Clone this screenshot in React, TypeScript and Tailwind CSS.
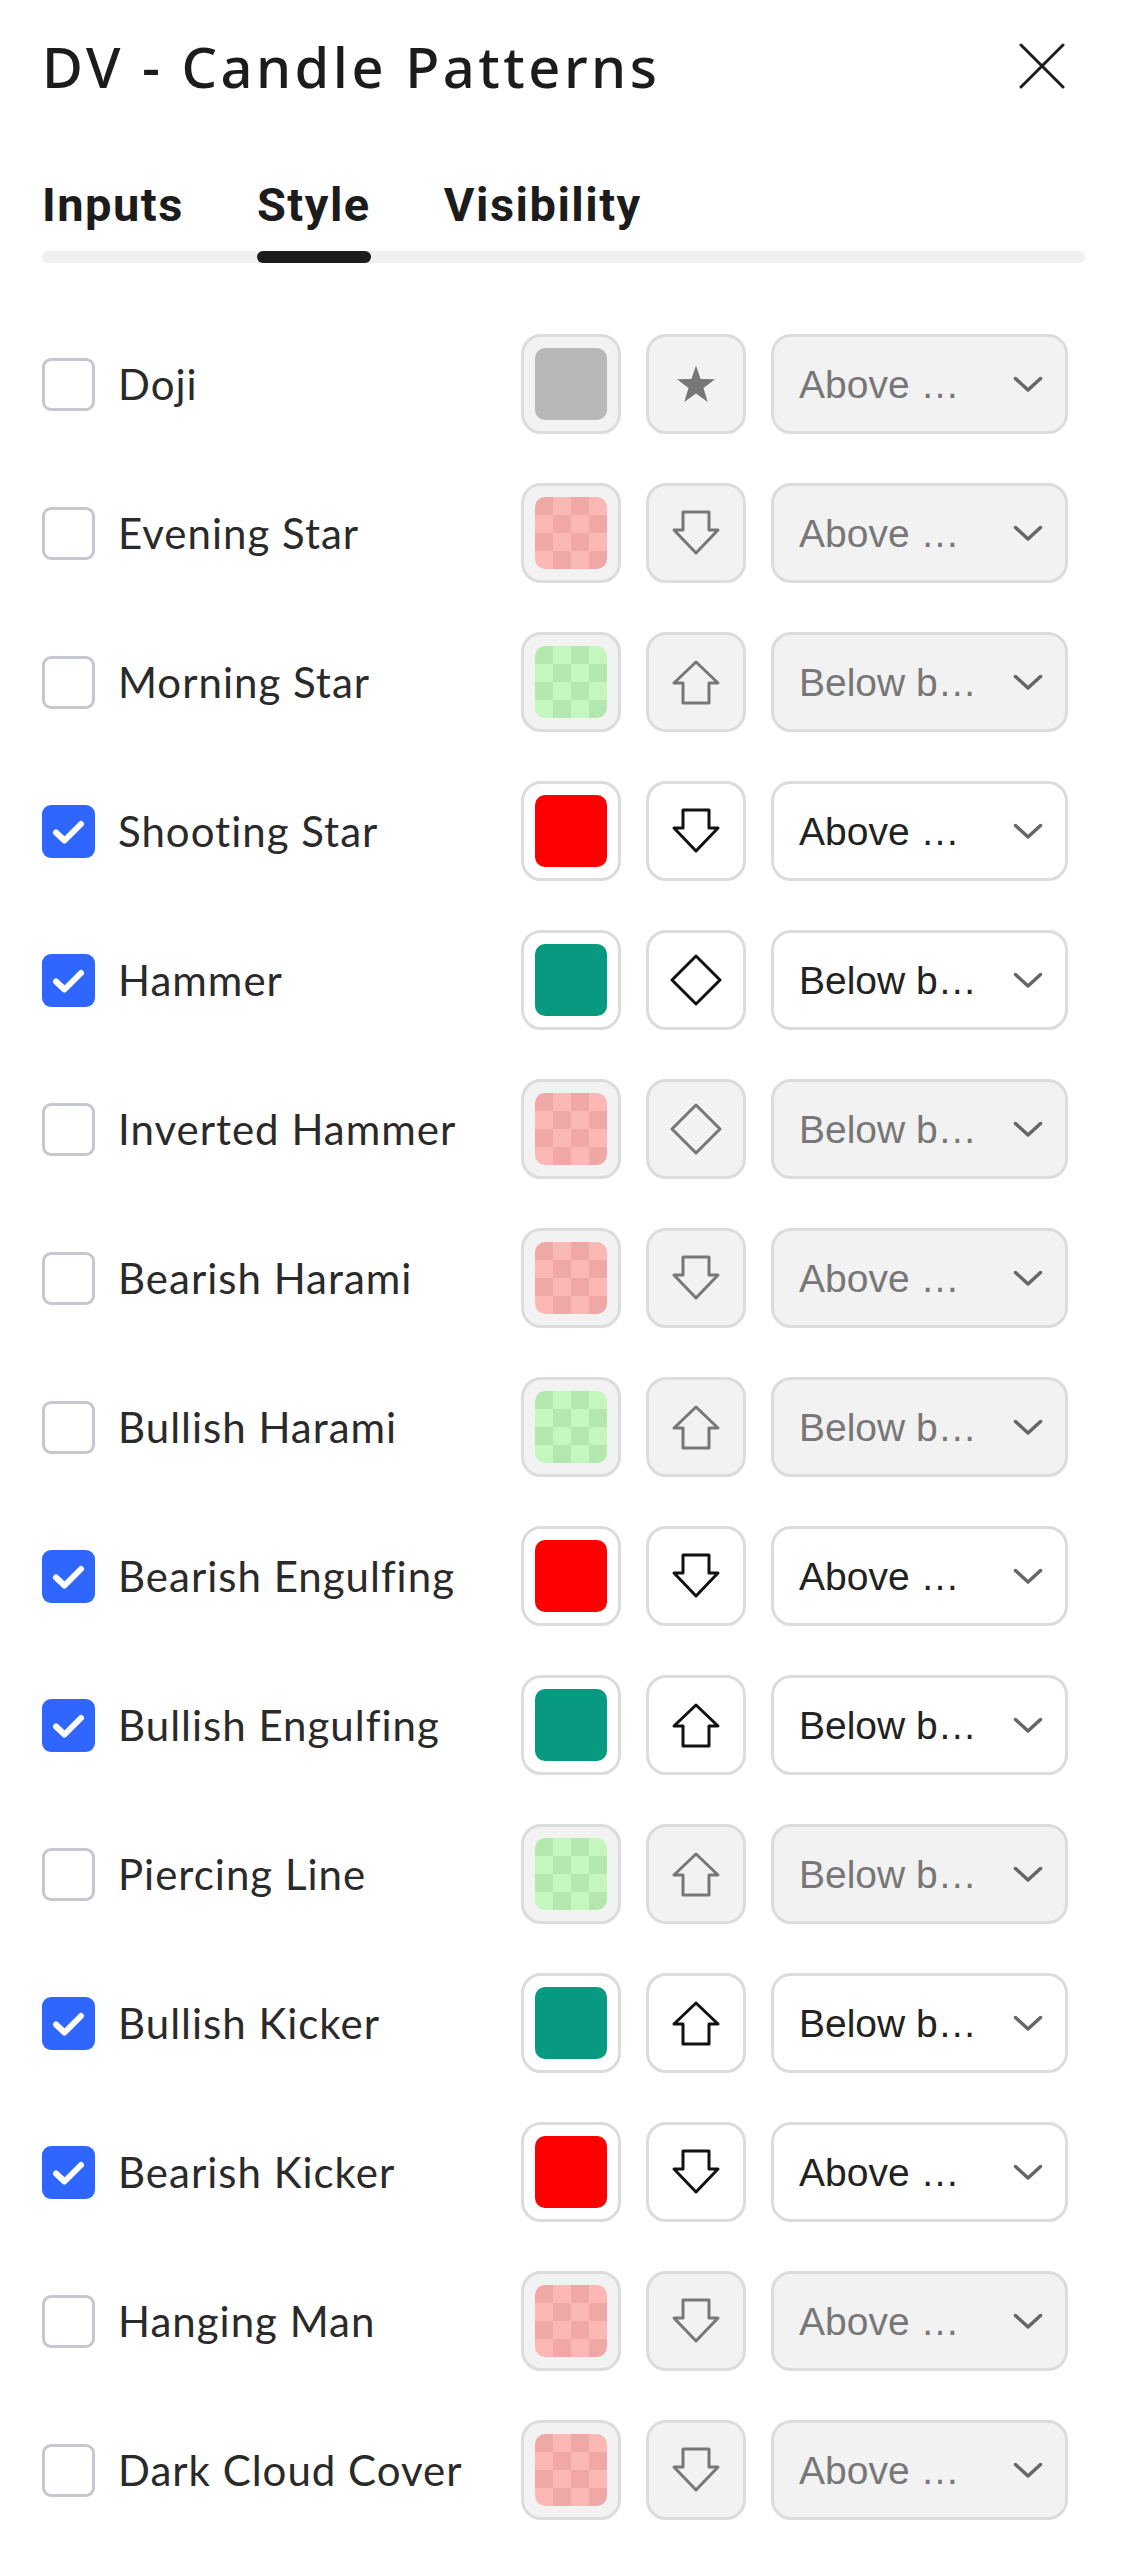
import React from 'react';

type Shape = 'star' | 'down' | 'up' | 'diamond';
type Swatch = 'gray' | 'pink' | 'green' | 'red' | 'teal';

interface PatternRow {
  name: string;
  enabled: boolean;
  swatch: Swatch;
  shape: Shape;
  place: string;
}

const rows: PatternRow[] = [
  { name: 'Doji', enabled: false, swatch: 'gray', shape: 'star', place: 'Above …' },
  { name: 'Evening Star', enabled: false, swatch: 'pink', shape: 'down', place: 'Above …' },
  { name: 'Morning Star', enabled: false, swatch: 'green', shape: 'up', place: 'Below b…' },
  { name: 'Shooting Star', enabled: true, swatch: 'red', shape: 'down', place: 'Above …' },
  { name: 'Hammer', enabled: true, swatch: 'teal', shape: 'diamond', place: 'Below b…' },
  { name: 'Inverted Hammer', enabled: false, swatch: 'pink', shape: 'diamond', place: 'Below b…' },
  { name: 'Bearish Harami', enabled: false, swatch: 'pink', shape: 'down', place: 'Above …' },
  { name: 'Bullish Harami', enabled: false, swatch: 'green', shape: 'up', place: 'Below b…' },
  { name: 'Bearish Engulfing', enabled: true, swatch: 'red', shape: 'down', place: 'Above …' },
  { name: 'Bullish Engulfing', enabled: true, swatch: 'teal', shape: 'up', place: 'Below b…' },
  { name: 'Piercing Line', enabled: false, swatch: 'green', shape: 'up', place: 'Below b…' },
  { name: 'Bullish Kicker', enabled: true, swatch: 'teal', shape: 'up', place: 'Below b…' },
  { name: 'Bearish Kicker', enabled: true, swatch: 'red', shape: 'down', place: 'Above …' },
  { name: 'Hanging Man', enabled: false, swatch: 'pink', shape: 'down', place: 'Above …' },
  { name: 'Dark Cloud Cover', enabled: false, swatch: 'pink', shape: 'down', place: 'Above …' },
];

const CheckBox: React.FC<{ checked: boolean }> = ({ checked }) =>
  checked ? (
    <div className="flex h-[53px] w-[53px] shrink-0 items-center justify-center rounded-[9px] bg-[#2f66ff]">
      <svg width="53" height="53" viewBox="0 0 53 53" fill="none">
        <path d="M14 27.5 L22.5 35.5 L39 19" stroke="white" strokeWidth="6" strokeLinecap="round" strokeLinejoin="round" />
      </svg>
    </div>
  ) : (
    <div className="h-[53px] w-[53px] shrink-0 rounded-[9px] border-[3px] border-[#c5c8d0] bg-white" />
  );

const Checker: React.FC<{ light: string; dark: string }> = ({ light, dark }) => (
  <div className="grid h-[72px] w-[72px] grid-cols-4 overflow-hidden rounded-[10px]">
    {Array.from({ length: 16 }).map((_, i) => {
      const r = Math.floor(i / 4);
      const c = i % 4;
      return <div key={i} className="h-[18px] w-[18px]" style={{ background: (r + c) % 2 === 0 ? dark : light }} />;
    })}
  </div>
);

const SwatchFill: React.FC<{ swatch: Swatch }> = ({ swatch }) => {
  if (swatch === 'pink') return <Checker light="#fbb8b4" dark="#efa8a6" />;
  if (swatch === 'green') return <Checker light="#c3f7be" dark="#b2e8ad" />;
  if (swatch === 'gray') return <div className="h-[72px] w-[72px] rounded-[10px] bg-[#b8b8b8]" />;
  if (swatch === 'red') return <div className="h-[72px] w-[72px] rounded-[10px] bg-[#ff0000]" />;
  return <div className="h-[72px] w-[72px] rounded-[10px] bg-[#089981]" />;
};

const ShapeIcon: React.FC<{ shape: Shape; color: string }> = ({ shape, color }) => {
  if (shape === 'star')
    return (
      <svg width="40" height="38" viewBox="0 0 40 38">
        <path d="M20 0.5 L24.6 14 L39 14.2 L27.5 22.9 L31.7 37 L20 28.6 L8.3 37 L12.5 22.9 L1 14.2 L15.4 14 Z" fill={color} />
      </svg>
    );
  if (shape === 'down')
    return (
      <svg width="50" height="46" viewBox="0 0 50 46" fill="none">
        <path d="M12 2 H38 V20 H47 L25 43 L3 20 H12 Z" stroke={color} strokeWidth="3" strokeLinejoin="round" />
      </svg>
    );
  if (shape === 'up')
    return (
      <svg width="50" height="46" viewBox="0 0 50 46" fill="none">
        <path d="M25 3 L47 24 H38 V44 H12 V24 H3 Z" stroke={color} strokeWidth="3" strokeLinejoin="round" />
      </svg>
    );
  return (
    <svg width="52" height="52" viewBox="0 0 52 52" fill="none">
      <path d="M26 2 L50 26 L26 50 L2 26 Z" stroke={color} strokeWidth="3" strokeLinejoin="round" />
    </svg>
  );
};

const Row: React.FC<{ row: PatternRow }> = ({ row }) => {
  const box = row.enabled ? 'bg-white border-[#dcdcdc]' : 'bg-[#f2f2f2] border-[#dcdcdc]';
  return (
    <div className="flex h-[100px] items-center">
      <div className="flex flex-1 items-center gap-[23px]">
        <CheckBox checked={row.enabled} />
        <span className="text-[42px] leading-none tracking-[1px] text-[#2a2a2a]">{row.name}</span>
      </div>
      <div className="flex items-center gap-[25px]">
        <div className={`flex h-[100px] w-[100px] items-center justify-center rounded-[20px] border-[3px] ${box}`}>
          <SwatchFill swatch={row.swatch} />
        </div>
        <div className={`flex h-[100px] w-[100px] items-center justify-center rounded-[20px] border-[3px] ${box}`}>
          <ShapeIcon shape={row.shape} color={row.enabled ? '#111111' : '#777777'} />
        </div>
        <div className={`flex h-[100px] w-[297px] items-center justify-between rounded-[20px] border-[3px] pl-[25px] pr-[22px] ${box}`}>
          <span
            className={`whitespace-nowrap text-[39px] leading-none ${row.enabled ? 'text-[#222222]' : 'text-[#777777]'}`}
            style={{ fontFamily: '"Liberation Sans", Arial, sans-serif' }}
          >
            {row.place}
          </span>
          <svg width="30" height="17" viewBox="0 0 30 17" fill="none">
            <path d="M2.5 2.5 L15 14 L27.5 2.5" stroke="#666666" strokeWidth="3.5" strokeLinecap="round" strokeLinejoin="round" />
          </svg>
        </div>
      </div>
    </div>
  );
};

export default function App() {
  const tabs = ['Inputs', 'Style', 'Visibility'];
  return (
    <div
      className="min-h-[2560px] w-[1121px] bg-white pl-[42px] pr-[36px] pt-[38px]"
      style={{ fontFamily: 'Lato, "Noto Sans", sans-serif' }}
    >
      <div className="flex h-[56px] items-center justify-between pr-[20px]">
        <h1
          className="text-[56px] font-medium leading-none tracking-[3.5px] text-[#1c1c1c]"
          style={{ fontFamily: '"Noto Sans", Lato, sans-serif' }}
        >
          DV - Candle Patterns
        </h1>
        <svg width="46" height="46" viewBox="0 0 46 46" fill="none">
          <path d="M2 2 L44 44 M44 2 L2 44" stroke="#1c1c1c" strokeWidth="3" strokeLinecap="round" />
        </svg>
      </div>

      <div className="relative mt-[87px]">
        <div className="absolute bottom-0 left-0 right-0 h-[12px] rounded-full bg-[#f0f0f0]" />
        <div className="relative flex gap-[73px]">
          {tabs.map(t => (
            <div key={t} className="flex flex-col gap-[23px]">
              <span
                className="text-[47px] font-bold leading-none tracking-[1.5px] text-[#1c1c1c]"
                style={{ fontFamily: 'Roboto, "Noto Sans", sans-serif' }}
              >
                {t}
              </span>
              <div className={`h-[12px] rounded-full ${t === 'Style' ? 'bg-[#1c1c1c]' : 'bg-transparent'}`} />
            </div>
          ))}
        </div>
      </div>

      <div className="mt-[71px] flex flex-col gap-[49px] pr-[17px]">
        {rows.map(r => (
          <Row key={r.name} row={r} />
        ))}
      </div>
    </div>
  );
}
